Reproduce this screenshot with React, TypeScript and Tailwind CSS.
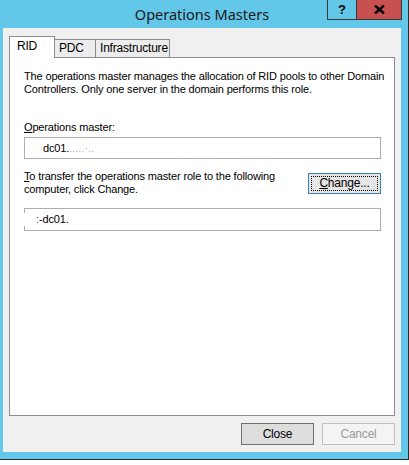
import React from "react";

const ui = "font-['Liberation_Sans',Arial,sans-serif] text-[11px] tracking-[-0.15px] leading-[13px] text-black";

function Tab({ label, selected, w }: { label: string; selected?: boolean; w: string }) {
  if (selected) {
    return (
      <div className={`relative z-10 -mb-px h-[22px] ${w} border border-b-0 border-[#898c95] bg-white pl-[7px] pt-[3px]`}>
        <span className="text-[12px] tracking-[-0.2px]">{label}</span>
      </div>
    );
  }
  return (
    <div className={`-ml-px h-[18px] ${w} border border-b-0 border-[#898c95] bg-[#ececec] pl-[4px] pt-[2px]`}>
      <span className="text-[12px] tracking-[-0.2px]">{label}</span>
    </div>
  );
}

export default function App() {
  return (
    <div className="h-[465px] w-[409px] bg-white">
      <div className="flex h-[460px] w-[409px] flex-col border-b border-r border-[#2b2b2b] bg-[#63c7e9]">
        {/* title bar */}
        <div className="relative h-[28px] shrink-0">
          <div className="pt-[4px] pr-[4px] text-center font-['Noto_Sans',sans-serif] text-[14.5px] leading-[20px] text-[#1a1a1a]">
            Operations Masters
          </div>
          <div className="absolute right-[6px] top-0 flex h-[20px]">
            <div className="flex h-[20px] w-[29px] items-center justify-center border border-t-0 border-r-0 border-[#3a3a3a] font-['Liberation_Sans',Arial,sans-serif] text-[13px] font-bold text-black">
              ?
            </div>
            <div className="flex h-[20px] w-[46px] items-center justify-center border border-t-0 border-[#3a3a3a] bg-[#c75050]">
              <svg width="11" height="9" viewBox="0 0 11 9">
                <path d="M1 0.5 L10 8.5 M10 0.5 L1 8.5" stroke="#000" strokeWidth="2.4" />
              </svg>
            </div>
          </div>
        </div>

        {/* client area */}
        <div className={`ml-[3px] flex h-[424px] w-[398px] flex-col bg-[#f0f0f0] px-[6px] pt-[8px] ${ui}`}>
          <div className="flex h-[21px] items-end">
            <Tab label="RID" selected w="w-[46px]" />
            <Tab label="PDC" w="w-[42px]" />
            <Tab label="Infrastructure" w="w-[75px]" />
          </div>

          <div className="h-[359px] w-[386px] border border-[#898c95] bg-white pl-[14px] pr-[13px] pt-[12px]">
            <p className="whitespace-nowrap">
              The operations master manages the allocation of RID pools to other Domain
              <br />
              Controllers. Only one server in the domain performs this role.
            </p>

            <div className="mt-[25px]">
              <span className="underline underline-offset-[1px]">O</span>perations master:
            </div>
            <div className="mt-[3px] flex h-[22px] items-center border border-[#abadb3] bg-white pl-[18px]">
              <span>dc01.</span>
              <span className="text-[#b8b8b8] tracking-[0px]">.....·..</span>
            </div>

            <div className="mt-[11px] flex items-start justify-between">
              <p className="whitespace-nowrap">
                <span className="underline underline-offset-[1px]">T</span>o transfer the operations master role to the following
                <br />
                computer, click Change.
              </p>
              <div className="mt-[3px] flex h-[21px] w-[73px] shrink-0 items-center justify-center border border-[#3c7fb1] bg-[#e5e5e5] p-[2px]">
                <div className="flex h-full w-full items-center justify-center border border-dotted border-black">
                  <span className="text-[12px] tracking-[-0.2px]">
                    <span className="underline underline-offset-[1px]">C</span>hange...
                  </span>
                </div>
              </div>
            </div>

            <div className="mt-[12px] flex h-[23px] items-center border border-l-0 border-[#abadb3] bg-white">
              <div className="flex h-full flex-col justify-between">
                <div className="h-[4px] w-px bg-[#abadb3]" />
                <div className="h-[4px] w-px bg-[#abadb3]" />
              </div>
              <span className="ml-[11px] text-[#555]">:</span>
              <span>-dc01.</span>
            </div>
          </div>

          <div className="mt-[7px] flex justify-end gap-[8px]">
            <div className="flex h-[22px] w-[73px] items-center justify-center border border-[#707070] bg-[#dddddd] text-[12px] tracking-[-0.2px]">
              Close
            </div>
            <div className="flex h-[22px] w-[73px] items-center justify-center border border-[#bfbfbf] bg-[#f4f4f4] text-[12px] tracking-[-0.2px] text-[#9a9a9a]">
              Cancel
            </div>
          </div>
        </div>
      </div>
    </div>
  );
}
